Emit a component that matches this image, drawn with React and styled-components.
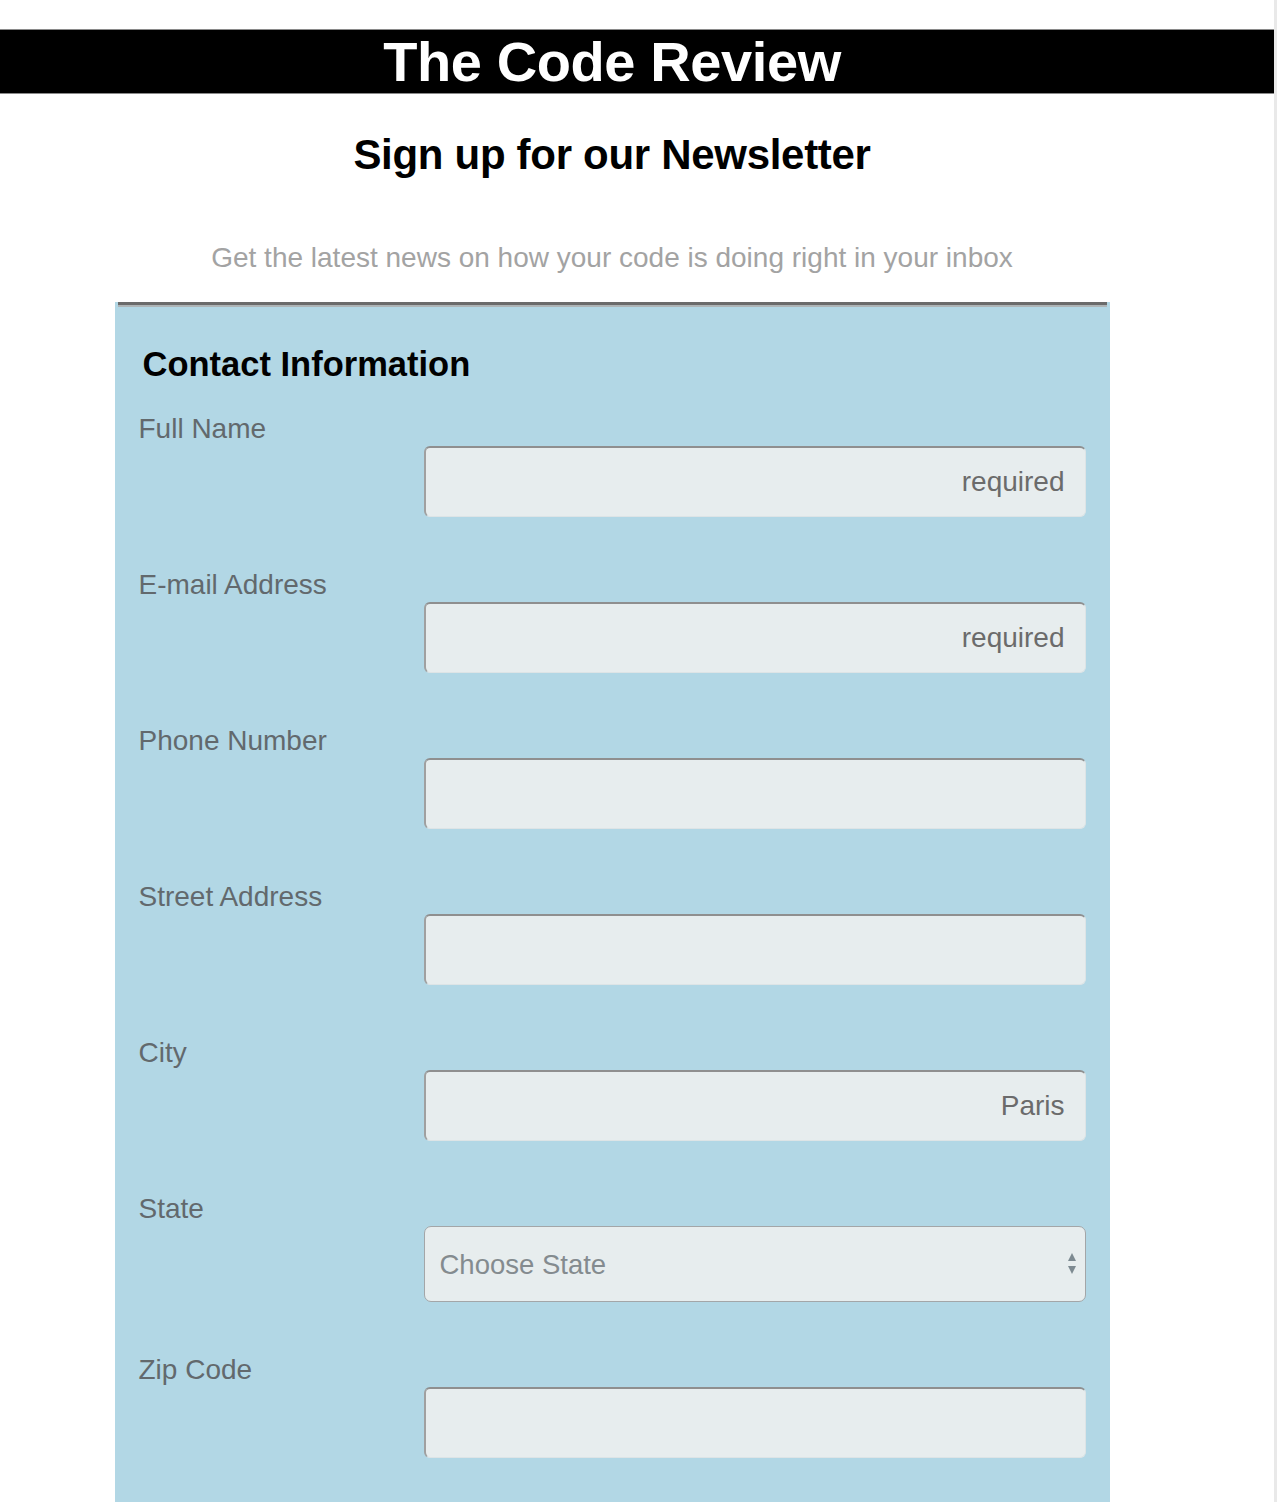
import React from 'react';
import styled, { createGlobalStyle } from 'styled-components';

const GlobalStyle = createGlobalStyle`
  body {
    margin: 0;
    background: #ffffff;
    font-family: "Liberation Sans", Arial, Helvetica, sans-serif;
  }
`;

const Page = styled.div`
  width: 1277px;
  min-height: 1502px;
  padding-top: 29px;
  box-sizing: border-box;
  border-right: 3px solid #e9e9e9;
`;

const Header = styled.header`
  height: 63px;
  background: #000;
  border-top: 1px solid #8a8a8a;
  border-bottom: 1px solid #8a8a8a;
`;

const HeaderTitle = styled.h1`
  width: 1224px;
  margin: 0;
  text-align: center;
  color: #fff;
  font-size: 56px;
  line-height: 63px;
  font-weight: 700;
  letter-spacing: -0.4px;
`;

const Main = styled.main`
  width: 1224px;
  display: flex;
  flex-direction: column;
  align-items: center;
`;

const Title = styled.h2`
  margin: 37px 0 0;
  font-size: 42px;
  line-height: 48px;
  font-weight: 700;
  color: #000;
  letter-spacing: -0.3px;
`;

const Intro = styled.p`
  margin: 62px 0 0;
  font-size: 28px;
  line-height: 34px;
  color: #a3a3a3;
`;

const FormBox = styled.form`
  width: 995px;
  margin-top: 27px;
  background: #b2d7e5;
  padding: 0 24px 40px 24px;
  box-sizing: border-box;
`;

const TopRule = styled.div`
  margin: 0 -21px 0 -21px;
  height: 3px;
  background: #6b6b6b;
  border-bottom: 2px solid #aeb4b6;
`;

const SectionTitle = styled.h3`
  margin: 37px 0 28px 4px;
  font-size: 34.5px;
  line-height: 40px;
  font-weight: 700;
  color: #000;
`;

const Field = styled.div`
  display: flex;
  flex-direction: column;
  margin-bottom: 51px;
`;

const Label = styled.label`
  font-size: 28px;
  line-height: 32px;
  padding-top: 1px;
  height: 32px;
  box-sizing: border-box;
  margin-bottom: 2px;
  color: #62696d;
`;

const TextInput = styled.input`
  margin-left: 285px;
  height: 71px;
  box-sizing: border-box;
  background: #e7edee;
  border-top: 2px solid #8f8f8f;
  border-left: 2px solid #a0a0a0;
  border-right: 1px solid #dde4e6;
  border-bottom: 1px solid #dde4e6;
  border-radius: 6px;
  padding: 0 20px;
  font-family: inherit;
  font-size: 28px;
  color: #555;
  text-align: right;
  outline: none;

  &::placeholder {
    color: #6b6b6b;
    opacity: 1;
  }
`;

const SelectWrap = styled.div`
  position: relative;
  margin-left: 285px;
`;

const Select = styled.select`
  width: 100%;
  height: 76px;
  appearance: none;
  box-sizing: border-box;
  background: #e7edee;
  border: 1px solid #a3a6a8;
  border-radius: 7px;
  padding: 0 15px;
  font-family: inherit;
  font-size: 27.5px;
  color: #848b8f;
  outline: none;
`;

const Arrows = styled.svg`
  position: absolute;
  right: 8px;
  top: 26px;
  pointer-events: none;
`;

const fields = [
  { id: 'name', label: 'Full Name', placeholder: 'required' },
  { id: 'email', label: 'E-mail Address', placeholder: 'required' },
  { id: 'phone', label: 'Phone Number', placeholder: '' },
  { id: 'street', label: 'Street Address', placeholder: '' },
  { id: 'city', label: 'City', placeholder: 'Paris' },
];

const App = () => {
  return (
    <Page>
      <GlobalStyle />
      <Header>
        <HeaderTitle>The Code Review</HeaderTitle>
      </Header>
      <Main>
        <Title>Sign up for our Newsletter</Title>
        <Intro>Get the latest news on how your code is doing right in your inbox</Intro>
        <FormBox onSubmit={(e) => e.preventDefault()}>
          <TopRule />
          <SectionTitle>Contact Information</SectionTitle>
          {fields.map((field) => (
            <Field key={field.id}>
              <Label htmlFor={field.id}>{field.label}</Label>
              <TextInput id={field.id} type="text" placeholder={field.placeholder} />
            </Field>
          ))}
          <Field>
            <Label htmlFor="state">State</Label>
            <SelectWrap>
              <Select id="state" defaultValue="">
                <option value="">Choose State</option>
                <option value="CA">California</option>
                <option value="NY">New York</option>
                <option value="TX">Texas</option>
              </Select>
              <Arrows width="12" height="24" viewBox="0 0 12 24">
                <path d="M6 1 L10 9 L2 9 Z" fill="#7d8a91" />
                <path d="M2 14 L10 14 L6 22 Z" fill="#7d8a91" />
              </Arrows>
            </SelectWrap>
          </Field>
          <Field>
            <Label htmlFor="zip">Zip Code</Label>
            <TextInput id="zip" type="text" />
          </Field>
        </FormBox>
      </Main>
    </Page>
  );
};

export default App;
